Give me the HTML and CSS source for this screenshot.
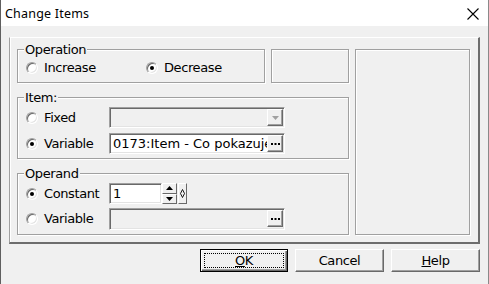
FILE: index.html
```html
<!DOCTYPE html>
<html lang="en">
<head>
    <meta charset="UTF-8">
    <title>Change Items</title>
    <link rel="stylesheet" href="styles.css">
</head>
<body>
    <div class="window">
        <div class="titlebar">
            <span class="title">Change Items</span>
            <svg class="close" width="12" height="12" viewBox="0 0 12 12">
                <path d="M0.5 0.5L11.5 11.5M11.5 0.5L0.5 11.5" stroke="#000" stroke-width="1.1" fill="none"/>
            </svg>
        </div>

        <div class="client">
            <div class="panel">
                <div class="left">
                    <div class="toprow">
                        <div class="group op-group">
                            <span class="legend">Operation</span>
                            <div class="opts">
                                <label class="opt first"><span class="radio"></span>Increase</label>
                                <label class="opt"><span class="radio checked"></span>Decrease</label>
                            </div>
                        </div>
                        <div class="group blank"></div>
                    </div>

                    <div class="group item-group">
                        <span class="legend">Item:</span>
                        <div class="fields">
                            <label class="opt"><span class="radio"></span>Fixed</label>
                            <div class="field disabled">
                                <span class="value"></span>
                                <span class="btn-mini">
                                    <svg width="7" height="4" viewBox="0 0 7 4"><polygon points="0,0 7,0 3.5,4" fill="#a0a0a0"/></svg>
                                </span>
                            </div>
                            <label class="opt"><span class="radio checked"></span>Variable</label>
                            <div class="field">
                                <span class="value">0173:Item - Co pokazuje</span>
                                <span class="btn-mini">
                                    <svg width="9" height="2" viewBox="0 0 9 2"><rect x="0" y="0" width="2" height="2"/><rect x="3.5" y="0" width="2" height="2"/><rect x="7" y="0" width="2" height="2"/></svg>
                                </span>
                            </div>
                        </div>
                    </div>

                    <div class="group operand-group">
                        <span class="legend">Operand</span>
                        <div class="fields">
                            <label class="opt"><span class="radio checked"></span>Constant</label>
                            <div class="spin">
                                <div class="field num"><span class="value">1</span></div>
                                <div class="spinner">
                                    <span class="spin-btn">
                                        <svg width="7" height="4" viewBox="0 0 7 4"><polygon points="0,4 7,4 3.5,0"/></svg>
                                    </span>
                                    <span class="spin-btn">
                                        <svg width="7" height="4" viewBox="0 0 7 4"><polygon points="0,0 7,0 3.5,4"/></svg>
                                    </span>
                                </div>
                                <span class="spin-extra">
                                    <svg width="5" height="9" viewBox="0 0 5 9"><path d="M2.5 0.5L4.5 4.5L2.5 8.5L0.5 4.5Z" fill="none" stroke="#000" stroke-width="0.9"/></svg>
                                </span>
                            </div>
                            <label class="opt"><span class="radio"></span>Variable</label>
                            <div class="field disabled tall">
                                <span class="value"></span>
                                <span class="btn-mini">
                                    <svg width="9" height="2" viewBox="0 0 9 2"><rect x="0" y="0" width="2" height="2"/><rect x="3.5" y="0" width="2" height="2"/><rect x="7" y="0" width="2" height="2"/></svg>
                                </span>
                            </div>
                        </div>
                    </div>
                </div>

                <div class="group preview"></div>
            </div>

            <div class="buttons">
                <button class="btn default"><span class="focus"><u>O</u>K</span></button>
                <button class="btn">Cancel</button>
                <button class="btn"><u>H</u>elp</button>
            </div>
        </div>
    </div>
</body>
</html>
```

FILE: styles.css
```css
* {
    box-sizing: border-box;
    margin: 0;
    padding: 0;
}

body {
    width: 489px;
    height: 284px;
    overflow: hidden;
    font-family: "DejaVu Sans", sans-serif;
    font-size: 13px;
    letter-spacing: -0.4px;
    color: #000;
    background: #f0f0f0;
}

.window {
    width: 489px;
    height: 284px;
    display: flex;
    flex-direction: column;
    border-left: 1px solid #5f5f5f;
    border-right: 1px solid #8a8a8a;
    background: #f0f0f0;
}

/* title bar */
.titlebar {
    height: 26px;
    background: #fff;
    display: flex;
    align-items: center;
    justify-content: space-between;
    padding: 0 9px 0 4px;
}

.title {
    font-family: "Noto Sans", sans-serif;
    font-size: 12.5px;
    letter-spacing: 0.2px;
}

.close {
    display: block;
    margin-top: 1px;
}

/* client area */
.client {
    flex: 1;
    padding: 11px 8px 0 8px;
}

.panel {
    height: 207px;
    display: grid;
    grid-template-columns: 332px 115px;
    column-gap: 6px;
    padding: 11px 8px 7px 7px;
    border-style: solid;
    border-width: 1px 2px 2px 1px;
    border-color: #fff #6d6d6d #6d6d6d #a0a0a0;
    box-shadow: inset 1px 0 0 #fff;
}

.left {
    display: flex;
    flex-direction: column;
    gap: 14px;
}

.toprow {
    display: flex;
    gap: 6px;
    height: 34px;
}

.group {
    position: relative;
    border: 1px solid #a0a0a0;
    box-shadow: 1px 1px 0 #fff, inset 1px 1px 0 #fff;
}

.op-group {
    width: 248px;
}

.blank {
    width: 78px;
}

.item-group,
.operand-group {
    height: 62px;
}

.legend {
    position: absolute;
    top: -8px;
    left: 6px;
    padding: 0 1px;
    line-height: 16px;
    background: #f0f0f0;
}

.opts {
    display: flex;
    padding: 10px 0 0 8px;
}

.opt {
    display: flex;
    align-items: center;
    gap: 6px;
    height: 15px;
}

.opts .first {
    width: 120px;
}

/* radio buttons */
.radio {
    position: relative;
    width: 12px;
    height: 12px;
    flex: none;
    border-radius: 50%;
    background: #fff;
    border: 1px solid;
    border-color: #a0a0a0 #fff #fff #a0a0a0;
    box-shadow: inset 1px 1px 0 #696969, inset -1px -1px 0 #e3e3e3;
}

.radio.checked::after {
    content: "";
    position: absolute;
    left: 3px;
    top: 3px;
    width: 4px;
    height: 4px;
    border-radius: 50%;
    background: #000;
}

/* fields */
.fields {
    display: grid;
    grid-template-columns: 83px 176px;
    grid-auto-rows: 21px;
    row-gap: 5px;
    align-items: center;
    padding: 9px 0 0 8px;
}

.operand-group .fields {
    row-gap: 4px;
}

.field {
    height: 21px;
    display: flex;
    align-items: center;
    padding: 1px;
    background: #fff;
    border: 1px solid;
    border-color: #a0a0a0 #fff #fff #a0a0a0;
    box-shadow: inset 1px 1px 0 #696969, inset -1px -1px 0 #e3e3e3;
    overflow: hidden;
}

.field.tall {
    height: 22px;
}

.field.disabled {
    background: #f0f0f0;
}

.value {
    flex: 1;
    padding-left: 2px;
    white-space: nowrap;
    overflow: hidden;
    letter-spacing: 0;
    line-height: 17px;
}

.btn-mini {
    width: 16px;
    height: 17px;
    flex: none;
    display: flex;
    align-items: center;
    justify-content: center;
    background: #f0f0f0;
    border: 1px solid;
    border-color: #fff #696969 #696969 #fff;
    box-shadow: inset -1px -1px 0 #a0a0a0;
}

.btn-mini svg {
    display: block;
}

/* spin control */
.spin {
    display: flex;
    align-items: center;
    height: 21px;
}

.field.num {
    width: 53px;
}

.spinner {
    width: 15px;
    height: 21px;
    display: flex;
    flex-direction: column;
}

.spin-btn {
    flex: 1;
    display: flex;
    align-items: center;
    justify-content: center;
    background: #f0f0f0;
    border: 1px solid;
    border-color: #fff #696969 #696969 #fff;
}

.spin-btn svg,
.spin-extra svg {
    display: block;
}

.spin-extra {
    width: 9px;
    height: 21px;
    margin-left: 1px;
    display: flex;
    align-items: center;
    justify-content: center;
    background: #f0f0f0;
    border: 1px solid;
    border-color: #fff #696969 #696969 #fff;
}

/* dialog buttons */
.buttons {
    display: flex;
    justify-content: flex-end;
    gap: 7px;
    margin-top: 5px;
}

.btn {
    width: 89px;
    height: 23px;
    font-family: "DejaVu Sans", sans-serif;
    font-size: 13px;
    letter-spacing: -0.4px;
    color: #000;
    background: #f0f0f0;
    border: 1px solid;
    border-color: #fff #696969 #696969 #fff;
    box-shadow: inset -1px -1px 0 #a0a0a0;
    display: flex;
    align-items: center;
    justify-content: center;
}

.btn.default {
    width: 88px;
    border: 1px solid #000;
    box-shadow: inset 1px 1px 0 #fff, inset -1px -1px 0 #696969, inset -2px -2px 0 #a0a0a0;
    padding: 3px;
}

.focus {
    flex: 1;
    align-self: stretch;
    display: flex;
    align-items: center;
    justify-content: center;
    border: 1px dotted #000;
}
```
